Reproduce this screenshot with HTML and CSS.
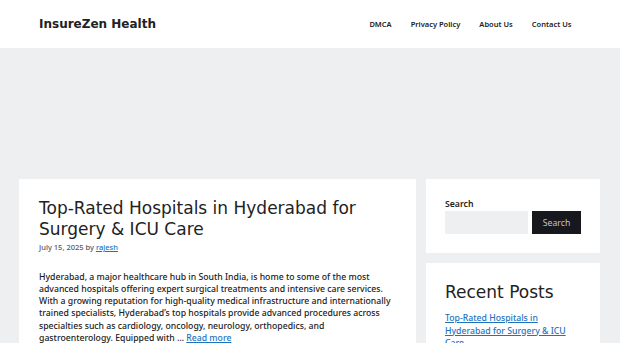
FILE: index.html
```html
<!DOCTYPE html>
<html lang="en">
<head>
    <meta charset="UTF-8">
    <meta name="viewport" content="width=device-width, initial-scale=1.0">
    <title>InsureZen Health</title>
    <link rel="stylesheet" href="styles.css">
</head>
<body>
    <header class="siteHeader">
        <div class="headerInner">
            <a href="/" class="siteTitle">InsureZen Health</a>
            <nav class="mainNav">
                <a href="/dmca">DMCA</a>
                <a href="/privacy-policy">Privacy Policy</a>
                <a href="/about-us">About Us</a>
                <a href="/contact-us">Contact Us</a>
            </nav>
        </div>
    </header>

    <div class="adSpace"></div>

    <div class="siteContent">
        <main class="mainColumn">
            <article class="postCard">
                <h2 class="postTitle"><a href="#">Top-Rated Hospitals in Hyderabad for Surgery &amp; ICU Care</a></h2>
                <div class="postMeta">July 15, 2025 by <a href="#">rajesh</a></div>
                <p class="postExcerpt">Hyderabad, a major healthcare hub in South India, is home to some of the most advanced hospitals offering expert surgical treatments and intensive care services. With a growing reputation for high-quality medical infrastructure and internationally trained specialists, Hyderabad’s top hospitals provide advanced procedures across specialties such as cardiology, oncology, neurology, orthopedics, and gastroenterology. Equipped with … <a href="#">Read more</a></p>
            </article>
        </main>

        <aside class="sidebar">
            <div class="widget">
                <label class="searchLabel" for="searchInput">Search</label>
                <div class="searchRow">
                    <input type="text" id="searchInput" class="searchInput">
                    <button class="searchButton">Search</button>
                </div>
            </div>
            <div class="widget">
                <h2 class="widgetTitle">Recent Posts</h2>
                <ul class="recentList">
                    <li><a href="#">Top-Rated Hospitals in Hyderabad for Surgery &amp; ICU Care</a></li>
                </ul>
            </div>
        </aside>
    </div>
</body>
</html>
```

FILE: styles.css
```css
body {
    margin: 0;
    padding: 0;
    background-color: #eeeff1; /* light grey page */
    font-family: "Noto Sans", sans-serif;
    font-weight: 500;
    color: #222222;
}
a {
    color: #1e73be;
}
.siteHeader {
    background-color: #ffffff;
    height: 48px;
}
.headerInner {
    display: flex;
    align-items: center;
    justify-content: space-between;
    height: 100%;
    padding: 0 39px;
}
.siteTitle {
    font-family: "DejaVu Sans", sans-serif;
    font-weight: bold;
    font-size: 12px;
    color: #222222;
    text-decoration: none;
}
.mainNav {
    display: flex;
}
.mainNav a {
    padding: 0 9.5px;
    font-size: 7.5px;
    font-weight: 600;
    color: #222222;
    text-decoration: none;
}
.adSpace {
    height: 131px;
}
.siteContent {
    display: flex;
    gap: 10px;
    padding: 0 20px 0 19px;
}
.mainColumn {
    flex: 0 0 397px;
}
.postCard {
    background-color: #ffffff;
    padding: 19px 20px 20px;
}
.postTitle {
    margin: 0;
    font-family: "DejaVu Sans", sans-serif;
    font-weight: normal;
    font-size: 17px;
    line-height: 21px;
}
.postTitle a {
    color: #222222;
    text-decoration: none;
}
.postMeta {
    margin-top: 3px;
    font-size: 7.5px;
    line-height: 9px;
    color: #575760;
}
.postExcerpt {
    margin: 18.5px 0 0;
    font-size: 8.7px;
    line-height: 12.3px;
}
.sidebar {
    flex: 1;
    display: flex;
    flex-direction: column;
    gap: 10px;
}
.widget {
    background-color: #ffffff;
    padding: 19px;
}
.searchLabel {
    display: block;
    font-size: 8.7px;
    font-weight: 600;
    line-height: 12px;
    margin-bottom: 1px;
}
.searchRow {
    display: flex;
    gap: 4px;
}
.searchInput {
    width: 83px;
    height: 23px;
    box-sizing: border-box;
    border: none;
    background-color: #eeeff1;
    padding: 0;
}
.searchButton {
    width: 49px;
    height: 23px;
    border: none;
    background-color: #17171e;
    color: #c4c4c4;
    font-family: "Noto Sans", sans-serif;
    font-size: 8.7px;
    padding: 0;
}
.widgetTitle {
    margin: 0 0 10px;
    font-family: "DejaVu Sans", sans-serif;
    font-weight: normal;
    font-size: 17px;
    line-height: 20px;
}
.recentList {
    list-style: none;
    margin: 0;
    padding: 0;
    font-size: 8.7px;
    line-height: 12.5px;
}
```
